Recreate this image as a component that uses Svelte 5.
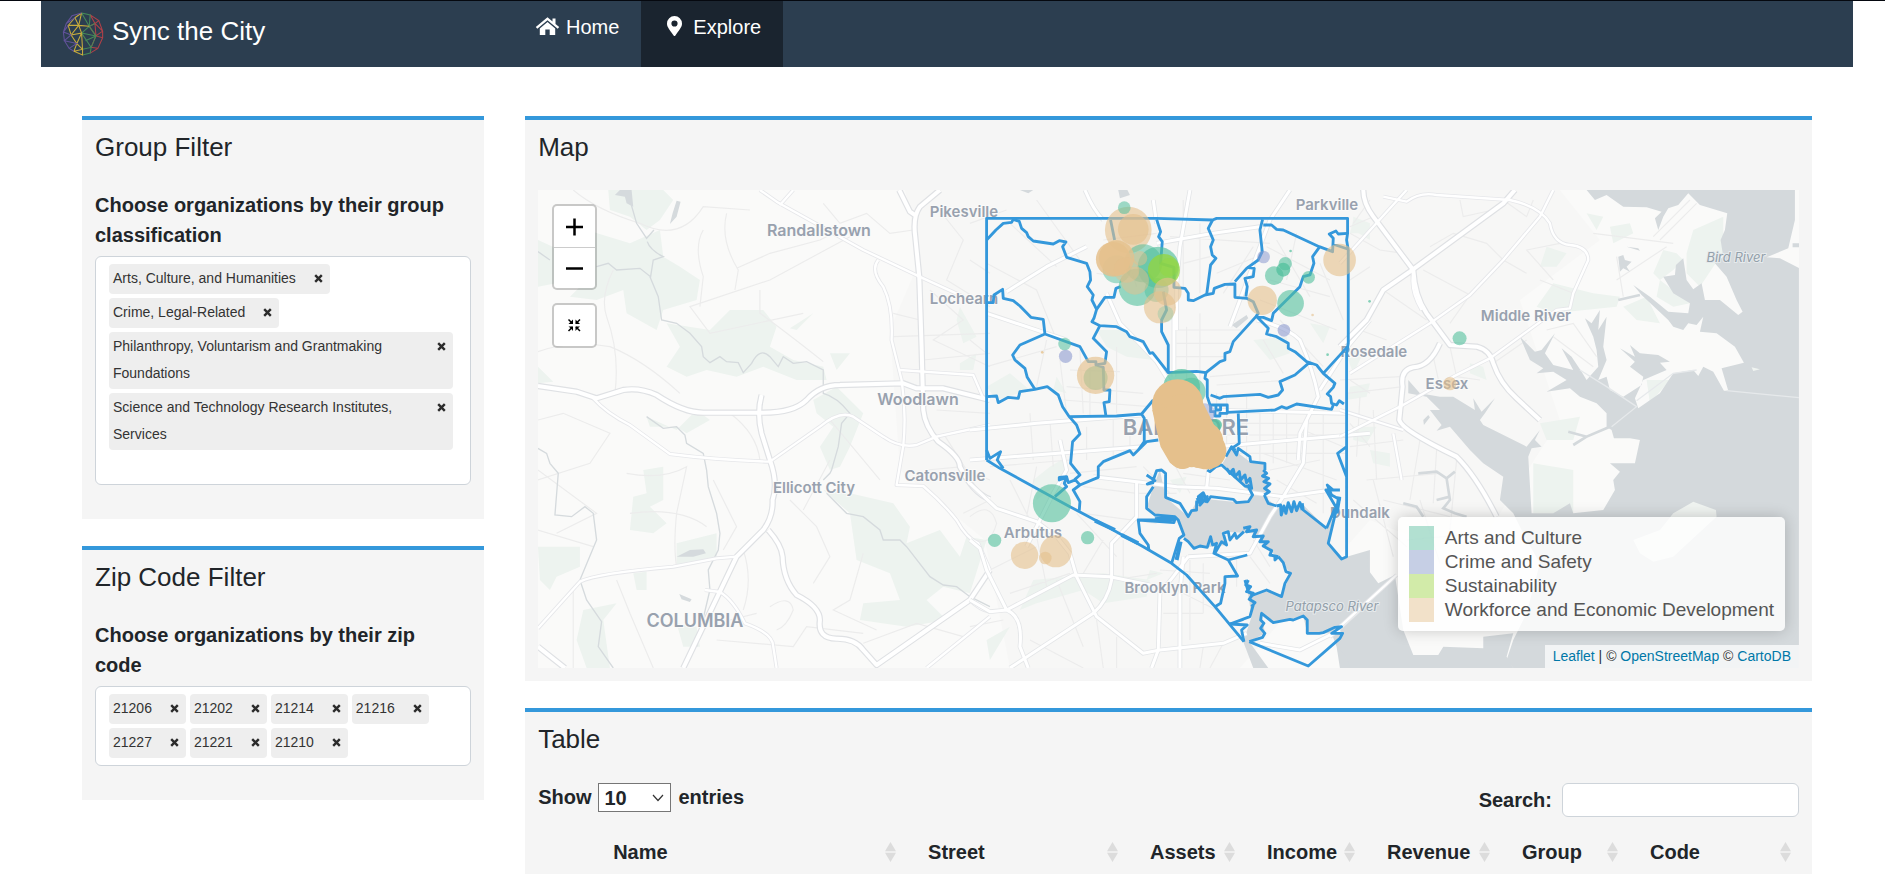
<script>
  const groups = [
    'Arts, Culture, and Humanities',
    'Crime, Legal-Related',
    'Philanthropy, Voluntarism and Grantmaking Foundations',
    'Science and Technology Research Institutes, Services'
  ];
  const zips = ['21206', '21202', '21214', '21216', '21227', '21221', '21210'];

  const legend = [
    { name: 'Arts and Culture', color: '#66c2a5' },
    { name: 'Crime and Safety', color: '#8da0cb' },
    { name: 'Sustainability', color: '#a6d854' },
    { name: 'Workforce and Economic Development', color: '#e5c494' }
  ];

  const columns = [
    { name: '', share: 51 },
    { name: 'Name', share: 315 },
    { name: 'Street', share: 222 },
    { name: 'Assets', share: 117 },
    { name: 'Income', share: 120 },
    { name: 'Revenue', share: 135 },
    { name: 'Group', share: 128 },
    { name: 'Code', share: 173 }
  ];
  const total = columns.reduce((sum, c) => sum + c.share, 0);

  const places = [
    { name: 'Randallstown', x: 819, y: 236, size: 16 },
    { name: 'Pikesville', x: 964, y: 217, size: 15 },
    { name: 'Lochearn', x: 964, y: 304, size: 15 },
    { name: 'Woodlawn', x: 918, y: 405, size: 16 },
    { name: 'Catonsville', x: 945, y: 481, size: 15 },
    { name: 'Ellicott City', x: 814, y: 493, size: 15 },
    { name: 'COLUMBIA', x: 695, y: 627, size: 18 },
    { name: 'Parkville', x: 1327, y: 210, size: 15 },
    { name: 'Rosedale', x: 1374, y: 357, size: 15 },
    { name: 'Middle River', x: 1526, y: 321, size: 15 },
    { name: 'Essex', x: 1447, y: 389, size: 15 },
    { name: 'BALTIMORE', x: 1186, y: 435, size: 22 },
    { name: 'Arbutus', x: 1033, y: 538, size: 15 },
    { name: 'Brooklyn Park', x: 1175, y: 593, size: 15 },
    { name: 'Dundalk', x: 1360, y: 518, size: 15 }
  ];
  const rivers = [
    { name: 'Bird River', x: 1736, y: 262, size: 13 },
    { name: 'Patapsco River', x: 1332, y: 611, size: 13 }
  ];

  const T = '#52c09c';
  const P = '#8d9bd0';
  const G = '#93d63c';
  const W = '#e5c08c';
  // [cx, cy, r, colour, opacity]
  const pins = [
    [475, 150, 70, W, 0.6], [490, 148, 46, W, 0.6], [463, 83, 19, T, 0.55],
    [520, 250, 57, T, 0.55], [502, 322, 56, T, 0.6], [560, 330, 36, T, 0.5], [440, 268, 42, T, 0.5],
    [565, 262, 62, T, 0.65], [430, 238, 52, W, 0.85], [440, 234, 53, W, 0.8], [470, 270, 38, W, 0.5],
    [495, 302, 42, W, 0.5], [510, 235, 22, W, 0.5], [582, 270, 48, G, 0.75], [596, 262, 28, G, 0.4],
    [570, 382, 48, W, 0.6], [593, 335, 42, W, 0.6], [587, 402, 24, T, 0.25],
    [881, 231, 19, P, 0.55], [946, 251, 20, T, 0.6], [940, 269, 21, T, 0.75], [913, 287, 28, T, 0.6],
    [1016, 292, 19, T, 0.6], [962, 370, 40, T, 0.6], [877, 361, 44, W, 0.6], [1109, 240, 49, W, 0.6],
    [942, 451, 19, P, 0.6], [284, 492, 19, T, 0.55], [287, 529, 20, P, 0.6],
    [377, 594, 36, T, 0.6], [377, 586, 56, W, 0.65],
    [962, 213, 4, T, 0.7], [1028, 405, 4, W, 0.6], [217, 517, 4, W, 0.8], [1073, 524, 4, T, 0.7], [1199, 364, 4, T, 0.7],
    [635, 622, 55, T, 0.7], [665, 635, 42, T, 0.6], [738, 735, 18, T, 0.8], [705, 700, 30, P, 0.5],
    [246, 970, 57, T, 0.6], [74, 1081, 20, T, 0.6], [353, 1073, 20, T, 0.6],
    [164, 1126, 41, W, 0.6], [258, 1114, 48, W, 0.6], [226, 1134, 19, W, 0.6],
    [1469, 475, 21, T, 0.6], [1440, 611, 20, W, 0.6],
    [623, 675, 77, W, 1], [634, 715, 72, W, 1], [642, 760, 72, W, 1], [665, 790, 72, W, 1],
    [700, 785, 60, W, 1], [714, 812, 55, W, 1], [638, 826, 41, W, 1], [690, 812, 52, W, 1]
  ];

  // Road centre lines, each drawn in the grid of its own tile.
  const west = [
    'M24 618L140 635L200 655L280 630Q330 622 380 645Q460 698 520 698L690 698Q790 700 830 660Q870 615 930 615L1120 610L1160 625L1240 625L1380 660',
    'M1230 30L1170 80Q1148 110 1156 170L1168 290L1175 500L1180 690Q1185 740 1225 785Q1290 830 1290 860Q1330 940 1380 958',
    'M695 645Q680 700 695 760L720 840Q745 910 728 960Q730 1010 700 1050L620 1130L460 1464',
    'M715 1050Q755 1095 758 1130Q760 1200 800 1245Q870 1280 870 1320Q862 1375 920 1376Q975 1375 1000 1410L1040 1455L1320 1260L1380 1170',
    'M24 1400L105 1464M1108 30L1140 95L1155 105'
  ];
  const westThin = [
    'M190 655Q230 700 300 735L420 822Q560 840 720 845L870 740Q930 690 970 710L1060 770Q1110 805 1160 795L1220 770L1380 735',
    'M690 30L740 65L1000 210L1180 295L1300 350',
    'M1045 240Q1020 270 1060 320Q1090 380 1085 480L1115 600Q1130 700 1120 798L1100 915L1180 918Q1240 970 1280 1020Q1310 1075 1345 1090L1380 1170',
    'M24 1345L150 1205Q200 1180 430 1160L560 1135L620 1130',
    'M525 1230L570 1236Q610 1260 645 1330Q730 1360 730 1400L740 1464M1320 1260Q1350 1290 1380 1295M1190 1464L1380 1310M790 30L750 75M1110 570L1180 575L1330 585L1360 655'
  ];
  const westFaint =
    'M24 515Q120 480 240 500Q340 540 450 640M130 30Q200 90 330 130Q450 190 520 80L660 90M590 100Q570 180 625 270L615 330M690 330V400Q760 450 880 545M520 150Q490 200 520 290L510 380M620 265L720 220L870 180L930 150M250 270Q210 350 230 410Q270 520 255 640M24 720L100 700L240 760L180 850L24 900M24 870L200 1000L80 1060M600 700Q680 760 690 840M290 880Q400 900 470 860L440 1000Q430 1100 440 1160M300 1000Q450 980 530 1040M640 1110Q670 1200 640 1290M720 1280Q780 1240 790 1290Q770 1340 740 1350M850 1210L900 1130L860 1040L780 960M1000 1120L960 1260L910 1290L1040 1350M820 990L900 840M900 720L1050 900M1220 80L1300 180L1250 300L1380 380M1200 330L1300 420L1210 480L1380 560M1090 400L1170 420M1090 470L1380 460M1180 540L1380 520M1220 690L1380 700M1240 760L1310 870L1380 900M1190 870L1300 860M880 70L930 130L1010 100L1080 160L1150 150M820 400L540 460L480 380L720 300L960 170M24 1050L190 1100M260 1200L300 1300L370 1464M130 1230L130 1464M560 1380L790 1400L830 1340L1000 1360M680 1300L600 1320M1000 1390L1160 1330L1300 1370M550 900L620 1040L580 1110M1300 1000L1380 960';
  const city = [
    'M345 30Q370 90 400 120M410 340L450 430Q500 480 560 545L620 640M550 60L560 130M660 30L630 200L620 320V450M612 400V590M780 440L900 120L960 30',
    'M110 335L230 260L350 200M560 190L730 160L870 140M860 420Q950 440 990 480Q1030 570 1045 650L990 760L985 840',
    'M0 750L200 730L520 705M720 690L1130 700M0 840L520 800M740 800L1200 760M50 400L290 480M1050 630L1133 500L1200 420',
    'M0 910L80 985L200 1025L260 1070L300 1120L320 1190L380 1310L520 1420L570 1410L760 1390L830 1360',
    'M0 1080L30 1105L50 1170L110 1290Q160 1310 150 1400L175 1464M0 1260L60 1295L110 1290L310 1185L420 1190L540 1215',
    'M120 1464L370 1300Q415 1260 425 1200L425 1090L500 1010L500 905M655 1130L610 1190L570 1240L565 1410L545 1464M630 1464V1240L640 1130',
    'M655 1130L840 1120L900 1010L940 950L1000 850L1010 720M1080 1370L1200 1260M370 890L500 905L620 920L740 925L940 950L1070 932M720 830L710 925',
    'M870 1390L990 1410L1110 1350M270 780L290 870L250 940L170 1100'
  ];
  const cityFaint =
    'M50 250L200 330L260 480M120 130L260 260M200 60L330 240M50 560L260 500M230 480L200 620M270 540L290 700M330 510L340 700M360 550V720M440 500V700M300 570L450 575M290 620L520 640M280 660L540 680M180 700L190 840M240 720L250 860M350 740V840M430 720V830M480 720V820M620 450H820M620 490H790M610 530L760 530M650 440V640M690 400V640M720 590L900 575M740 615L960 600M740 640V840M770 640V850M830 650V850M870 700V850M910 700V850M950 700V850M720 730H1130M720 765H1130M720 820H1130M1060 690V1000M1000 750L1120 800M640 60V320M690 130V340M600 170L900 190M640 250L720 230M740 280L860 230M760 340L850 200M890 200L1080 300M920 180L1020 350M980 160L950 300M900 300L1080 350M870 360L1100 450M1050 250L1120 420M930 420L1060 560M880 480L940 580M380 280L540 300M400 180L560 160M460 190L500 320M60 860L300 840M300 880L500 860M340 920L500 940M120 900L180 1020M200 860L170 1010M340 1000L560 1030M500 940H620M520 860L600 940M590 810L660 940M640 880L780 900M900 870L1050 840M880 820L1100 900M920 900L1040 970M0 1010Q60 960 80 1030Q60 1100 20 1080M60 1170L200 1100M200 1070L230 1220M120 1240L300 1180M260 1200L340 1400M340 1180L400 1080M430 1200L560 1180M460 1080V1200M320 1000L440 1130M570 1170L720 1180M600 1220L740 1290M660 1140V1380M700 1150V1300M0 1340L100 1320M180 1380L340 1464M380 1320L400 1464M440 1370V1464M700 1400L690 1464M760 1390L720 1464M580 1300H700M800 1130V1220M840 1130L900 1210M850 1080L900 1160M0 130L110 90M0 240L60 280M0 480L50 520M1140 300L1200 260M1150 130L1200 60M1140 600L1200 640M1140 730L1200 800';
  const east = [
    'M70 30Q70 70 100 110L220 270Q225 350 260 400L330 495L410 500Q450 510 460 550Q480 610 530 655L600 720',
    'M525 30L490 70L210 275L130 330L80 420L0 500',
    'M300 490Q270 560 220 562Q180 570 188 620L178 720Q185 750 350 830Q410 890 470 1010'
  ];
  const eastThin = [
    'M130 50L200 65Q240 35 290 45L510 60Q600 80 630 130Q640 190 690 195Q745 200 745 240L700 340L690 385L650 390L450 535L340 590L180 680L0 770',
    'M640 30L600 110L490 240L390 345L270 430L30 580M0 690L190 750M200 30L0 250M160 760L185 900M220 280Q210 330 245 390M170 1185L0 1340'
  ];
  const eastFaint =
    'M360 60L370 110L460 90M490 60L560 110L580 60M270 200L340 160L440 190L490 240L560 280M250 270L390 345L330 430M100 110L30 140M30 160L120 210L190 220M130 330L260 420M60 450L140 480M330 500L350 590L420 600M280 530L300 620M460 550L560 480M640 300L560 210L660 190M700 340L600 300M830 230L850 350M620 450L700 430L770 530M640 470L760 560M0 600L180 590M20 640L190 620M60 650L50 830M100 690L110 900M30 800L190 780M80 900L300 880M240 780L210 960M290 810L280 970M350 840L330 1050M130 960L330 1010M40 960L200 1100M100 900L160 1130M240 960L300 1150M200 1080L420 1060M760 160L1000 190M960 180L1070 70M940 170L1050 60M980 200L830 300';
</script>

<div class="page">
  <header class="navbar">
    <a class="brand" href="#home">
      <svg class="logo" viewBox="0 0 44 46" aria-hidden="true">
        <g fill="none" stroke-width="1.100">
          <path stroke="#b04048" d="M29 3L38 9L42 20L42 27L37 38L29 43M29 3L34 12L42 20M34 12L35 25L42 27M35 25L30 37L37 38M38 9L34 12L28 15M35 25L28 15M35 25L42 20" />
          <path stroke="#458a58" d="M20 1L29 3L28 15L34 12M28 15L20 22L30 37L29 43L21 45M28 15L35 25L30 37L21 39M20 22L35 25M20 1L28 15M24 30L35 25" />
          <path stroke="#c8ac3c" d="M20 1L13 6L17 14L20 1M13 6L6 14L17 14L20 22L9 24L17 14M17 14L28 15M20 22L15 33L9 24M15 33L21 39L20 22M15 33L12 41L21 45L21 39L12 41M6 14L9 24" />
          <path stroke="#62529a" d="M20 1L10 4L4 12L1 21L2 30L7 38L12 41M6 14L1 21L9 24L2 30L15 33L7 38M4 12L13 6" />
        </g>
      </svg>
      <span>Sync the City</span>
    </a>
    <nav>
      <a href="#home">
        <svg class="nav-icon" viewBox="0 0 25 20" aria-hidden="true">
          <path fill="#fff" d="M12.500 1.200L.8 11l1.500 1.800L12.500 4.300l10.200 8.500 1.500-1.800-3.700-3.100V2.500h-3v2.900zM12.500 6L4.800 12.400V19h5.500v-5.500h4.400V19h5.500v-6.600z" />
        </svg>
        Home
      </a>
      <a href="#explore" class="active" aria-current="page">
        <svg class="nav-icon" viewBox="0 0 25 20" aria-hidden="true">
          <path fill="#fff" fill-rule="evenodd" d="M12.500 0a7.500 7.500 0 0 0-7.500 7.500c0 3 .9 3.900 6.600 12a1.100 1.100 0 0 0 1.800 0C19.100 11.400 20 10.500 20 7.500A7.500 7.500 0 0 0 12.500 0zm0 4.400a3.100 3.100 0 1 1 0 6.200 3.100 3.100 0 0 1 0-6.200z" />
        </svg>
        Explore
      </a>
    </nav>
  </header>

  <main>
    <div class="column">
      <section class="panel filter">
        <h2>Group Filter</h2>
        <label for="groups">Choose organizations by their group classification</label>
        <div class="chips">
          {#each groups as item}
            <span class="chip">
              {item}
              <button type="button" aria-label="Remove {item}">
                <svg viewBox="0 0 9 9"><path d="M1.200 1.200L7.800 7.800M7.800 1.200L1.200 7.800" /></svg>
              </button>
            </span>
          {/each}
          <input id="groups" type="text" />
        </div>
      </section>

      <section class="panel filter">
        <h2>Zip Code Filter</h2>
        <label for="zips">Choose organizations by their zip code</label>
        <div class="chips">
          {#each zips as item}
            <span class="chip">
              {item}
              <button type="button" aria-label="Remove {item}">
                <svg viewBox="0 0 9 9"><path d="M1.200 1.200L7.800 7.800M7.800 1.200L1.200 7.800" /></svg>
              </button>
            </span>
          {/each}
          <input id="zips" type="text" />
        </div>
      </section>
    </div>

    <div class="column">
      <section class="panel map-panel">
        <h2>Map</h2>
        <div class="map">
          <svg class="tiles" viewBox="538 190 1261 478" preserveAspectRatio="xMidYMid slice" aria-label="Map of Baltimore">
            <rect x="0" y="0" width="2400" height="900" fill="#fafaf9" />
            <path fill="#f7f7f6" d="M905 190L1560 190L1600 240L1520 300L1560 420L1470 560L1370 520L1240 668L1010 668L985 540L900 470L890 330L920 260Z" />

            <g fill="#edf3ef">
              <g transform="translate(530 180) scale(.33333)">
                <path d="M235 30L400 30L430 60L390 120L350 150L300 110L240 90ZM24 180L90 210L170 150L300 190L390 150L400 230L450 260L510 300L500 360L400 390L380 450L290 400L280 330L200 360L120 350L180 290L24 320ZM410 430L540 450L600 390L700 390L740 440L720 500L790 540L880 560L890 600L800 600L700 560L620 590L530 570L470 590L410 560L450 500ZM780 445L850 400L820 430L800 450ZM24 560L70 605L24 610ZM850 660L920 620L1000 700L960 800L930 860L900 870L870 800L910 740L860 700ZM350 710L440 750L500 690L540 720L470 760L440 740L360 740Z" />
                <path d="M340 870L400 860L400 960L360 980L410 1030L370 1060L300 1050L310 950L350 940ZM440 1090L560 1060L560 1140L440 1160ZM24 1100L150 1100L150 1160L80 1190L60 1230L30 1200ZM310 1180L350 1175L350 1230L320 1230ZM160 1290L260 1270L220 1320L240 1464L170 1464L140 1380ZM440 1330L500 1340L510 1400L460 1400ZM880 930L960 940L1090 970L1140 1040L1130 1090L1230 1050L1290 1130L1310 1070L1370 1080L1320 1240L1240 1220L1190 1260L1250 1320L1130 1340L990 1320L1000 1270L1110 1260L1080 1180L980 1140L960 1000ZM1290 380L1340 470L1300 490L1280 420ZM1290 550L1340 520L1330 570L1290 570ZM900 520L960 520L920 570Z" />
              </g>
              <g transform="translate(970 180) scale(.33333)">
                <path d="M380 450L470 450L520 500L550 540L470 530L410 500ZM50 620L120 580L180 630L80 660ZM260 590L290 640L250 630ZM850 480L950 470L960 520L900 540ZM1150 110L1200 130L1200 180L1150 150ZM240 860L290 830L280 900L200 960L190 900ZM190 1200L400 1180L540 1200L530 1250L400 1270L340 1230L200 1270L150 1290ZM50 1380L120 1340L60 1440ZM540 1170L580 1180L530 1200ZM1020 430L1080 440L1060 490ZM600 900L650 890L630 940ZM1120 500L1180 520L1150 580Z" />
              </g>
              <g transform="translate(1340 180) scale(.33333)">
                <path d="M40 120L90 130L80 160L30 160ZM590 380L640 310L760 340L840 350L830 380L640 400ZM620 200L680 220L650 260L600 260ZM850 380L920 350L960 430L890 420ZM1060 150L1150 110L1150 220L1120 260L1080 320L1040 280L1040 220ZM970 210L1010 220L1030 240L1000 270L960 300L940 280ZM810 140L870 130L880 160L820 190ZM740 100L790 110L770 150ZM780 30L970 30L880 50ZM960 300L1050 370L1000 380L950 350ZM900 520L970 540L900 570L880 540ZM920 600L990 600L930 670ZM40 740L110 740L80 790L40 780ZM30 620L90 610L80 650L20 660ZM580 850L700 870L700 1000L580 1000ZM600 730L720 710L700 780L620 780ZM90 810L150 820L150 860L100 850ZM390 550L430 560L440 600L390 580Z" />
              </g>
            </g>

            <g fill="none" stroke="#ececec" stroke-width="3.500">
              <path transform="translate(530 180) scale(.33333)" d={westFaint} />
              <path transform="translate(970 180) scale(.33333)" d={cityFaint} />
              <path transform="translate(1340 180) scale(.33333)" d={eastFaint} />
            </g>

            <g fill="none" stroke="#d5dadd" stroke-width="4" transform="translate(530 180) scale(.33333)">
              <path d="M300 60L320 130L350 175L372 150M352 185Q360 210 400 230L370 240L362 290L330 265L260 270L235 250L200 260M24 215L60 240M360 290L385 350L395 420L440 430L480 460L515 500L520 530L540 548L570 530L590 545L625 548L640 578L665 550Q690 500 720 530L745 560L760 530L790 550L830 545L880 570L880 640Q920 650 960 700L935 730L925 800L905 870L900 880L880 900M350 710L400 745L440 740L465 765L470 790L520 820L530 870L535 920L560 1000L570 1060L565 1110L535 1170L540 1230L500 1400M24 805L50 820L60 850L85 880L75 1005L125 1010L165 980L190 1000L200 1080L150 1200L170 1260L215 1325L205 1400L250 1464M890 940L950 1000L1000 1010L1050 1050L1060 1080L1110 1080L1130 1100L1200 1190L1240 1215L1280 1220L1320 1250L1380 1280" />
              <path fill="#d5dadd" stroke="none" d="M270 30H305L310 80L290 70L285 50L255 45ZM440 62L452 65L440 110L420 132L428 100ZM440 1130L480 1110L520 1108L528 1120L490 1130ZM448 1242L485 1258L480 1266L455 1258Z" />
            </g>

            <g fill="#d4d9dc">
              <g transform="translate(970 180) scale(.33333)">
                <path d="M785 805L840 845L885 850L895 960L940 990L995 970L1070 1045L1095 1000L1075 1090L1115 1135L1200 1110V1464H1110L1100 1400L1085 1360L1012 1360L1000 1308L910 1328L875 1300L885 1360L838 1385L895 1464H850L820 1385L845 1310L828 1200L850 1245L890 1230L935 1250L962 1180L915 1125L850 1060L755 1055L770 1095L712 1102L672 1105L642 1075L615 1010L555 1010L530 985L550 920L570 870L587 952L655 1010L685 955L790 965L835 965L848 945L755 855Z" />
                <path d="M785 435L830 405L835 415L800 445ZM150 30H190L175 40ZM445 30L470 25L480 45L450 55Z" />
              </g>
              <g transform="translate(1340 180) scale(.33333)">
                <path d="M740 30L765 60L800 45L850 80L920 82L965 95L945 115L955 150L970 110L985 85L1015 75L1045 40L1080 75L1162 100L1155 150L1142 180L1150 230L1125 250L1160 290L1190 360L1208 395L1195 405L1140 360L1095 360L1085 310L1060 328L1040 300L1030 235L1008 255L1005 285L970 290L1000 340L1050 370L1045 400L985 395L930 350L880 315L905 345L985 420L1000 440L1030 450L1045 430L1070 435L1090 410L1080 455L1130 460L1185 500L1212 548L1145 565L1165 632L1152 632L1120 575L1090 560L1075 588L1060 570L1000 580L960 640L895 685L885 655L910 600L980 570L960 548L990 545L955 525L900 520L870 495L885 530L840 505L885 545L870 560L910 590L905 615L850 650L810 630L800 590L775 600L800 540L790 500L800 410L775 450L780 390L755 430L735 415L760 470L770 510L775 560L740 600L725 575L695 530L665 505L700 570L640 555L615 520L645 460L605 510L585 515L540 470L570 540L610 565L590 580L640 575L680 600L620 635L690 625L720 650L770 670L800 700L800 740L815 750L822 775L870 775L900 780L885 850L810 850L840 875L820 900L825 930L790 990L700 1000L690 970L640 1000L575 1000L565 830L575 805L605 800L585 780L600 750L560 800L480 760L430 735L420 720L435 700L465 655L425 695L400 655L405 690L340 650L300 650L240 640L205 600V640L260 650L300 690L270 690L305 735L290 752L330 740L390 810L430 850L490 890L480 960L520 1000L560 1080L600 1150L560 1300L520 1380L500 1440L520 1464H1377V264L1320 235L1280 232L1345 205L1365 120V30Z" />
                <path d="M0 1145L80 1115L85 1170L115 1210L165 1185L190 1350L220 1425L295 1425L310 1400L430 1405V1370L520 1360L500 1430L520 1464H30L20 1430L0 1410ZM835 230L850 225L855 240L875 245L860 260L870 275L850 265L840 275ZM860 200L895 205L900 212ZM250 720L265 705L270 712L252 735ZM1358 190h20v12h-20Z" />
                <g fill="none" stroke="#d4d9dc" stroke-width="8">
                  <path d="M235 880L290 875L320 895L345 875M320 895L330 960L310 985L345 1000L380 1010M330 950L290 960M190 970L230 980L250 1010M685 755L740 770L810 740M740 770L700 795M835 360L900 345" />
                </g>
              </g>
            </g>
            <g transform="translate(1340 180) scale(.33333)">
              <path fill="#f0f4f1" d="M880 1080L900 1120L940 1145L1000 1130L1130 1010L1128 990L1060 965L1000 1000L960 1050ZM1235 562L1260 568L1240 573Z" />
              <path fill="none" stroke="#e6e9eb" stroke-width="4" d="M720 570L800 620L890 680L815 740M890 662L1000 580L1070 570M1160 632L1377 653" />
            </g>

            <g fill="none" stroke-linejoin="round">
              <g transform="translate(530 180) scale(.33333)">
                {#each west as d}<path {d} stroke="#dfe1e4" stroke-width="19" />{/each}
                {#each westThin as d}<path {d} stroke="#e6e7ea" stroke-width="12" />{/each}
                {#each westThin as d}<path {d} stroke="#fff" stroke-width="7" />{/each}
                {#each west as d}<path {d} stroke="#fff" stroke-width="12" />{/each}
              </g>
              <g transform="translate(970 180) scale(.33333)">
                {#each city as d}<path {d} stroke="#e4e6e8" stroke-width="14" />{/each}
                {#each city as d}<path {d} stroke="#fff" stroke-width="9" />{/each}
              </g>
              <g transform="translate(1340 180) scale(.33333)">
                {#each east as d}<path {d} stroke="#dfe1e4" stroke-width="19" />{/each}
                {#each eastThin as d}<path {d} stroke="#e6e7ea" stroke-width="12" />{/each}
                {#each eastThin as d}<path {d} stroke="#fff" stroke-width="7" />{/each}
                {#each east as d}<path {d} stroke="#fff" stroke-width="12" />{/each}
              </g>
            </g>

            <g class="places">
              {#each places as p}
                <text x={p.x} y={p.y} font-size={p.size}>{p.name}</text>
              {/each}
            </g>
            <g class="rivers">
              {#each rivers as p}
                <text x={p.x} y={p.y} font-size={p.size}>{p.name}</text>
              {/each}
            </g>

            <g transform="translate(970 180) scale(.33333)">
              <g fill="none" stroke="#3498db" stroke-width="8.500" stroke-linejoin="round">
                <path d="M50 840V115H560L728 120L740 115H1133V160L1130 180L1135 210V490L1130 520V1130L1115 1137L1075 1090L1100 985L1068 930L1110 930M1112 960L1085 945L1072 915L1090 930M1070 1045L1095 985M1130 800L1103 820L1130 890" />
                <path d="M50 180L78 150L100 130L125 127L130 118L148 124L155 145L170 158L175 170L190 183L250 192L268 182L288 186L278 200L290 232L350 250L360 275L362 300L352 320L370 345L366 360L380 388L372 415L366 425L390 437L440 440L470 455L480 470L520 485L540 520L548 518L595 578" />
                <path d="M380 388L405 352L432 352L438 325L452 320M422 120L434 180M560 118L572 155L566 170L577 185L572 250L612 262V322L645 325L655 340V360L670 362L705 345L730 340L733 325L765 313L795 312V352L830 355L850 365L865 400L858 410L790 485L780 515L765 520V540L750 545L708 578L680 574L595 578V495L575 455V420L590 390L580 335" />
                <path d="M728 120L715 145L730 180L722 200L727 225L738 235L722 255L710 345M878 118L870 150L877 215L865 240L830 265L795 305M832 262L853 265L850 290L825 295L832 320L828 350M880 135L905 135L920 148L940 150L1048 200L1088 215L1090 175L1078 162L1098 153L1105 162L1133 160M1088 192L1133 207" />
                <path d="M1048 202L1028 230L1032 250L1020 285L1000 290L990 320L910 400L905 422L880 412L862 412L895 445L890 462L920 470L955 490V505L975 515L1010 545L1040 555L1060 580L1133 500M1060 580L1095 610L1090 622L1072 642L1082 650L1085 670L1100 675L1108 662L1122 672M1018 548L975 585L930 605L938 630L925 645L895 652L870 643L760 650L750 655L722 645M708 578L705 595L712 600V650L722 680M722 675H772V700H750V708H735V695H722ZM738 678V690H752V678M772 697L915 690L935 680L950 685L980 672L1085 688L1092 670" />
                <path d="M50 650L80 648L85 668L115 652L145 655L150 635L195 628L232 620L265 645L278 680L298 710L440 708L515 702L550 660M50 368L70 368L72 345L98 328L100 355L130 362L150 378L183 412L220 418L225 462L150 495L128 525L135 540L165 565L172 592L195 628M225 462L330 500L355 545L378 545V555L405 550L410 515L370 475L390 437M378 555L400 562L402 630H420L418 665L402 668L408 708M298 710L320 735L330 762L308 785L302 850L330 885L315 898L330 915L310 930L330 965L328 992M330 915L385 892L385 860L400 845L480 812L490 825L530 785L565 780M515 702L523 715V785L505 810M805 700L808 790L785 805L798 810M255 950L290 920L283 910L290 892L268 900L268 892L290 890L295 908L320 898" />
                <path d="M50 840L90 865L300 980L385 1025L520 1100L605 1150L650 1185L735 1280L822 1385M50 810L60 835L92 815L82 840L100 865" />
                <path stroke-width="12" d="M375 1022L435 1050M455 1065L505 1090M620 1140L632 1085M1100 1000L1108 950" />
                <path d="M550 900L560 872L575 870L587 880V952L630 970L655 1010L665 992L680 990V965L690 968L685 950L700 938L712 965L722 950L790 958L800 968L835 965L848 945L835 920L825 918L755 855L738 860L720 875L712 870M530 885L555 902L532 912L552 908M550 920L530 950V985L555 1005L615 1010L625 1020L642 1065L628 1075L605 1150M505 1020L615 1018L612 1028L505 1020L510 1060L535 1095L537 1112M615 1010L555 1016" />
                <path stroke-width="9" d="M770 865L780 880L790 868L795 890L808 875L812 900L825 885L830 908L840 895L845 925L832 915M680 960L700 945L690 975L712 950L705 968M880 870L890 880L878 888L896 895L882 905L900 912L884 925L898 935L883 945M920 978L932 975L934 1005L942 978L948 1000L955 968L965 995L972 965L980 992L990 968L997 990M820 1045L840 1040L830 1055L860 1050L850 1070L880 1068L870 1085L895 1085L880 1098L905 1112L900 1125L925 1130M835 1200L828 1215L842 1220L830 1235L850 1240L838 1258L855 1268L845 1280" />
                <path d="M768 830L785 800L800 825L805 805L840 830L842 845L885 850V870M883 945L895 970L920 978M997 970L1000 990L1070 1045M642 1075L655 1085L672 1105L690 1098L712 1102L722 1070L728 1095L740 1090L732 1120L775 1140L832 1125M735 1120L755 1085L770 1095L760 1060L775 1055L780 1080L795 1060L800 1075L822 1055M925 1130L940 1148L948 1175L962 1180L945 1210L935 1250L890 1230L850 1245L835 1235L825 1200M775 1140L803 1188L765 1190V1210L752 1270L735 1280M850 1275L840 1310L780 1332L832 1335L815 1350L822 1385M780 1332L820 1318M838 1385L1015 1458L1110 1375L1118 1360H1085L1115 1340L1095 1342L1060 1358L1048 1360H1012V1320L1000 1308L970 1320L960 1318L910 1328L875 1300L872 1320L882 1330L872 1345L885 1360L878 1372L838 1385M915 1125V1140L925 1130" />
              </g>
              {#each pins as [cx, cy, r, color, opacity]}
                <circle {cx} {cy} {r} fill={color} fill-opacity={opacity} />
              {/each}
              <path fill="#e5c08c" d="M547 690L560 750L572 800L600 848Q620 866 640 867L660 858L700 868H725L765 830L740 750L695 660Z" />
            </g>
          </svg>

          <div class="controls">
            <div class="bar">
              <button type="button" aria-label="Zoom in">
                <svg viewBox="0 0 41 41"><path d="M12 21H29M20.500 12.500V29.500" stroke-width="2.500" /></svg>
              </button>
              <button type="button" aria-label="Zoom out">
                <svg viewBox="0 0 41 41"><path d="M12 20.500H29" stroke-width="2.500" /></svg>
              </button>
            </div>
            <div class="bar">
              <button type="button" aria-label="Reset view">
                <svg viewBox="0 0 41 41">
                  <path d="M14.500 14.500L18.500 18.500M26 14.500L22 18.500M14.500 26L18.500 22M26 26L22 22" stroke-width="1.500" />
                  <path fill="#000" stroke="none" d="M19 14.500V19H14.500L16.500 17L17 16.500ZM21.500 14.500V19H26L24 17ZM19 26V21.500H14.500L17 23.500ZM21.500 26V21.500H26L23.500 23.500Z" />
                </svg>
              </button>
            </div>
          </div>

          <ul class="legend">
            {#each legend as item}
              <li><i style="background: {item.color}"></i>{item.name}</li>
            {/each}
          </ul>

          <div class="credits">
            <a href="#leaflet">Leaflet</a> | © <a href="#osm">OpenStreetMap</a> © <a href="#carto">CartoDB</a>
          </div>
        </div>
      </section>

      <section class="panel table-panel">
        <h2>Table</h2>
        <div class="tools">
          <label class="length">
            Show
            <span class="select">
              <select>
                <option>10</option>
                <option>25</option>
                <option>50</option>
                <option>100</option>
              </select>
              <svg viewBox="0 0 12 8" aria-hidden="true"><path d="M1 1L6 6.500L11 1" /></svg>
            </span>
            entries
          </label>
          <label class="search">Search: <input type="search" /></label>
        </div>
        <table>
          <thead>
            <tr>
              {#each columns as c}
                <th style="width: {(c.share / total) * 100}%">
                  {#if c.name}
                    <div>
                      {c.name}
                      <svg viewBox="0 0 11 20" aria-hidden="true">
                        <path d="M5.500 0L11 9.300H0ZM5.500 20L0 10.700H11Z" />
                      </svg>
                    </div>
                  {/if}
                </th>
              {/each}
            </tr>
          </thead>
        </table>
      </section>
    </div>
  </main>
</div>

<style>
  :global(body) {
    margin: 0;
    background: #fff;
  }

  * {
    box-sizing: border-box;
  }

  .page {
    min-height: 100vh;
    display: flex;
    flex-direction: column;
    padding: 0 32px 0 41px;
    border-top: 1px solid #05080f;
    font: 20px/30px 'Liberation Sans', Arial, sans-serif;
    color: #212529;
  }

  .navbar {
    display: grid;
    grid-template-columns: minmax(240px, 473px) 1fr;
    height: 66px;
    background: #2c3e50;
  }

  .navbar a {
    color: #fff;
    text-decoration: none;
  }

  .brand {
    display: flex;
    align-items: center;
    gap: 7px;
    padding-left: 21px;
    font-size: 26px;
  }

  .brand span {
    padding-bottom: 6px;
  }

  .logo {
    width: 43px;
    height: 44px;
  }

  nav {
    display: flex;
  }

  nav a {
    display: flex;
    align-items: flex-start;
    gap: 6px;
    padding: 11px 22px 0 21px;
  }

  nav a.active {
    background: #1a242f;
  }

  .nav-icon {
    width: 25px;
    height: 20px;
    margin-top: 4px;
  }

  main {
    flex: 1;
    display: grid;
    grid-template-columns: 5fr 16fr;
    gap: 41px;
    padding: 49px 41px 0;
  }

  .column {
    display: flex;
    flex-direction: column;
    gap: 27px;
    min-width: 0;
  }

  .panel {
    padding: 12px 13px 13px;
    border-top: 4px solid #3498db;
    background: #f5f5f5;
  }

  .filter {
    padding-bottom: 34px;
  }

  .filter label {
    padding-right: 16px;
  }

  .table-panel {
    flex: 1;
  }

  h2 {
    margin: 0 0 27px;
    font-size: 26px;
    line-height: 31px;
    font-weight: 400;
  }

  label {
    display: block;
    font-weight: 700;
  }

  .chips {
    display: flex;
    flex-wrap: wrap;
    align-items: flex-start;
    gap: 4px;
    margin-top: 6px;
    padding: 7px 17px 7px 13px;
    border: 1px solid #ced4da;
    border-radius: 6px;
    background: #fff;
  }

  .chips input {
    flex: 1 1 40px;
    min-width: 40px;
    height: 23px;
    padding: 0;
    border: 0;
    outline: 0;
    background: transparent;
  }

  .chip {
    display: flex;
    justify-content: space-between;
    align-items: flex-start;
    gap: 18px;
    padding: 1px 7px 2px 4px;
    border-radius: 4px;
    background: #eee;
    color: #333;
    font-size: 14px;
    line-height: 27px;
  }

  .chip button {
    display: flex;
    align-items: center;
    flex: none;
    width: 9px;
    height: 27px;
    padding: 0;
    border: 0;
    background: none;
  }

  .chip svg {
    width: 9px;
    height: 9px;
    fill: none;
    stroke: #2b2b2b;
    stroke-width: 2.4;
  }

  .map {
    position: relative;
    height: 478px;
    overflow: hidden;
    background: #fafaf9;
  }

  .tiles {
    display: block;
    width: 100%;
    height: 100%;
  }

  .places text {
    font-family: Inter, 'Open Sans', sans-serif;
    font-weight: 600;
    text-anchor: middle;
    fill: #98a1ae;
    stroke: #fafaf9;
    stroke-width: 2;
    paint-order: stroke;
  }

  .rivers text {
    font-family: Inter, 'Open Sans', sans-serif;
    font-style: italic;
    text-anchor: middle;
    fill: #93a0aa;
    stroke: #e6eaec;
    stroke-width: 2;
    paint-order: stroke;
  }

  .controls {
    position: absolute;
    top: 14px;
    left: 14px;
    display: grid;
    gap: 13px;
  }

  .bar {
    border: 2px solid rgba(0, 0, 0, 0.2);
    border-radius: 5px;
    background: #fff;
    background-clip: padding-box;
  }

  .bar button {
    display: block;
    width: 41px;
    height: 41px;
    padding: 0;
    border: 0;
    background: none;
  }

  .bar button + button {
    border-top: 1px solid #ccc;
  }

  .bar svg {
    display: block;
    width: 41px;
    height: 41px;
    fill: none;
    stroke: #000;
  }

  .legend {
    position: absolute;
    right: 14px;
    bottom: 37px;
    margin: 0;
    padding: 9px 11px;
    list-style: none;
    border-radius: 5px;
    background: rgba(255, 255, 255, 0.8);
    box-shadow: 0 0 15px rgba(0, 0, 0, 0.2);
    color: #555;
    font-size: 19px;
    line-height: 24px;
  }

  .legend li {
    display: flex;
    gap: 11px;
  }

  .legend i {
    width: 25px;
    opacity: 0.5;
  }

  .credits {
    position: absolute;
    right: 0;
    bottom: 0;
    padding: 0 8px;
    background: rgba(255, 255, 255, 0.7);
    color: #333;
    font-size: 14px;
    line-height: 23px;
  }

  .credits a {
    color: #0078a8;
    text-decoration: none;
  }

  .tools {
    display: flex;
    justify-content: space-between;
    align-items: flex-start;
    padding-top: 1px;
  }

  .length {
    display: flex;
    gap: 7px;
    line-height: 28px;
  }

  .select {
    position: relative;
    width: 73px;
    height: 29px;
  }

  .select select {
    width: 100%;
    height: 100%;
    padding: 0 5px;
    border: 1px solid #767676;
    border-radius: 0;
    appearance: none;
    background: #fff;
    color: inherit;
    font: inherit;
  }

  .select svg {
    position: absolute;
    right: 7px;
    top: 11px;
    width: 12px;
    height: 8px;
    fill: none;
    stroke: #333;
    stroke-width: 1.2;
    pointer-events: none;
  }

  .search {
    display: flex;
    align-items: center;
    gap: 10px;
  }

  .search input {
    width: 237px;
    height: 34px;
    border: 1px solid #ced4da;
    border-radius: 6px;
    background: #fff;
    font: inherit;
  }

  table {
    width: 100%;
    table-layout: fixed;
    border-collapse: collapse;
    margin-top: 10px;
  }

  th {
    padding: 10px 8px 10px 24px;
    text-align: left;
    font-weight: 700;
  }

  th div {
    display: flex;
    align-items: center;
    justify-content: space-between;
  }

  th svg {
    flex: none;
    width: 11px;
    height: 20px;
    fill: #dcdcdc;
  }
</style>
